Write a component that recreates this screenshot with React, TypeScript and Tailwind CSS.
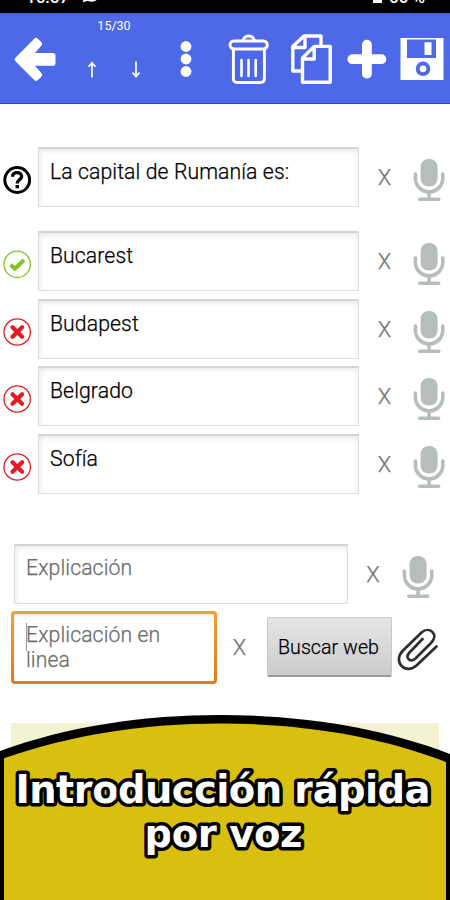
import React from "react";

function Mic() {
  return (
    <svg className="h-[44px] w-[32px] shrink-0" viewBox="0 0 32 44">
      <rect x="7.6" y="1" width="17" height="27.5" rx="8" fill="#b6bebd" />
      <path d="M2.4 16v4.2a13.7 13.7 0 0 0 27.4 0V16M16.1 34v7" fill="none" stroke="#b6bebd" strokeWidth="3.6" strokeLinecap="round" />
      <path d="M6.8 41.2h18.8" stroke="#b6bebd" strokeWidth="3.6" strokeLinecap="round" />
    </svg>
  );
}

function QuestionIcon() {
  return (
    <svg className="h-[30px] w-[30px]" viewBox="0 0 30 30" fill="none" stroke="#000">
      <circle cx="15.2" cy="15" r="12.4" strokeWidth="3" />
      <path d="M10.6 11.8C10.6 9.1 12.6 7.7 15.1 7.7C17.7 7.7 19.6 9.2 19.6 11.5C19.6 14.4 15.2 14.7 15.2 18.6" strokeWidth="3.3" />
      <path d="M13.5 20h3.5v3.3h-3.5z" fill="#000" stroke="none" />
    </svg>
  );
}

function CheckIcon() {
  return (
    <svg className="h-[30px] w-[30px]" viewBox="0 0 30 30" fill="none" stroke="#84c225">
      <circle cx="15.2" cy="15.3" r="13.2" strokeWidth="1.3" />
      <path d="M8.6 15.8l4.3 3.9L22 11" strokeWidth="4" strokeLinejoin="round" />
    </svg>
  );
}

function WrongIcon() {
  return (
    <svg className="h-[30px] w-[30px]" viewBox="0 0 30 30" fill="none" stroke="#e31b23">
      <circle cx="15.2" cy="15" r="13.2" strokeWidth="1.3" />
      <path d="M10.5 10.2l9.6 9.6M20.1 10.2l-9.6 9.6" strokeWidth="4.2" strokeLinecap="round" />
    </svg>
  );
}

const fieldText = "font-light text-[21.2px] leading-[24.7px] tracking-[0.1px] [-webkit-text-stroke-width:0.25px]";

const box = `border border-t-2 border-[#dedede] border-t-[#d4d4d4] bg-white shadow-[inset_3px_4px_7px_-3px_#e4e4e4,inset_-3px_0_6px_-4px_#e4e4e4] ${fieldText}`;

function Clear({ className }: { className: string }) {
  return (
    <span className={`w-[14px] text-center text-[22px] font-light leading-[25px] text-[#757575] [-webkit-text-stroke-width:0.25px] ${className}`}>
      X
    </span>
  );
}

function Row({ icon, text, className }: { icon: React.ReactNode; text: string; className: string }) {
  return (
    <div className={`flex h-[60px] shrink-0 items-start ${className}`}>
      <div className="ml-[2px] mt-[18px] h-[30px] w-[30px] shrink-0">{icon}</div>
      <div className={`ml-[6px] h-[60px] w-[321px] shrink-0 pl-[11px] pt-[10.5px] text-black ${box}`}>{text}</div>
      <Clear className="ml-[18.5px] mt-[18px]" />
      <div className="ml-[21.5px] mt-[11px]">
        <Mic />
      </div>
    </div>
  );
}

function StatusBar() {
  return (
    <div className="flex h-[13px] shrink-0 items-end overflow-hidden bg-black pb-[6px] text-[17px] font-medium leading-[20px] text-white">
      <span className="ml-[26px] w-[43px]">16:57</span>
      <svg className="ml-[13px] mb-[4px] h-[18px] w-[18px] shrink-0" viewBox="0 0 18 18" fill="none" stroke="#fff" strokeWidth="1.9">
        <path d="M2 16l1.2-4A7.2 7.2 0 1 1 6 14.9z" />
        <path d="M6 6q0 5 6 6" />
      </svg>
      <svg className="ml-[273px] mb-[4px] h-[16px] w-[9px] shrink-0" viewBox="0 0 9 16" fill="#fff">
        <path d="M0 2h3V0h3v2h3v14H0z" />
      </svg>
      <span className="ml-[7px] whitespace-nowrap">60 %</span>
    </div>
  );
}

function Toolbar() {
  return (
    <div className="flex h-[91px] shrink-0 items-start border-b border-t border-b-[#1846d2] border-t-[#3c55c0] bg-[#4d69e8] text-white">
      <svg className="ml-[12px] mt-[21px] h-[48px] w-[46px]" viewBox="0 0 46 48" fill="#fff" stroke="#fff" strokeLinejoin="round">
        <path d="M5.2 24.4L24 5.5L27.7 8.9L17.3 20.5H41V28.2H17.3L27.7 39.9L24 43.3z" strokeWidth="5" />
      </svg>
      <div className="ml-[24px] flex w-[64px] flex-col items-center">
        <span className="mt-[4px] text-[12.5px] leading-[16px]">15/30</span>
        <div className="mt-[27px] flex gap-[34px]">
          <svg className="h-[18px] w-[10px]" viewBox="0 0 10 18" fill="none" stroke="#fff" strokeWidth="1.7">
            <path d="M5 16.5V1.5M1.5 5.8L5 1.8l3.5 4" />
          </svg>
          <svg className="h-[18px] w-[10px]" viewBox="0 0 10 18" fill="none" stroke="#fff" strokeWidth="1.7">
            <path d="M5 .5v15M1.5 11.5L5 15.5l3.500-4" />
          </svg>
        </div>
      </div>
      <svg className="ml-[34px] mt-[26px] h-[38px] w-[12px]" viewBox="0 0 12 38" fill="#fff">
        <circle cx="6" cy="6.5" r="5.4" />
        <circle cx="6" cy="19" r="5.4" />
        <circle cx="6" cy="31.5" r="5.4" />
      </svg>
      <svg className="ml-[36px] mt-[19px] h-[52px] w-[42px]" viewBox="0 0 42 52" fill="none" stroke="#fff" strokeWidth="2.9">
        <path d="M15 8q1-5 5.7-5t5.7 5" />
        <rect x="2" y="8" width="37.3" height="8" rx="3.9" />
        <path d="M5.4 17V45.5q0 4 4 4h23q4 0 4-4V17" />
        <path d="M13.5 27v16M20.5 27v16M27.7 27v16" strokeWidth="2.6" strokeLinecap="round" />
      </svg>
      <svg className="ml-[20px] mt-[19px] h-[52px] w-[43px]" viewBox="0 0 43 52" fill="none" stroke="#fff" strokeWidth="3.4" strokeLinejoin="round">
        <path d="M11 38H2.8V13.5L14 3h17v9.5M15 3.5v11H3" />
        <path d="M12.5 25L24.2 13.4h16v35.9H12.5zM24.2 14v12H12.5" />
      </svg>
      <svg className="ml-[13px] mt-[25px] h-[42px] w-[42px]" viewBox="0 0 42 42" fill="none" stroke="#fff" strokeWidth="9.8" strokeLinecap="round">
        <path d="M20.9 5.7v29M6.4 20.2h29" />
      </svg>
      <svg className="ml-[12px] mt-[23px] h-[44px] w-[44px]" viewBox="0 0 44 44">
        <path d="M.5 1h43v42H.5z" fill="#fff" />
        <path d="M7 2.5h29V21H7zM24.5 5.3v12.7h7V5.3z" fill="#4d69e8" fillRule="evenodd" />
        <circle cx="23" cy="31.8" r="5.3" fill="none" stroke="#4d69e8" strokeWidth="3.9" />
      </svg>
    </div>
  );
}

function Banner() {
  return (
    <svg
      className="absolute left-0 top-[710px] h-[190px] w-[450px] font-['DejaVu_Sans',sans-serif] text-[38.5px] font-bold"
      viewBox="0 0 450 190"
    >
      <path d="M0 41C68 16 145 5 220 5C300 5 380 17 450 44V190H0z" fill="#000" />
      <path d="M4 48.3C72 24.5 145 13.5 220 13.5C298 13.5 376 25 446 52V190H4z" fill="#d9c010" />
      <g fill="#fff" stroke="#000" strokeWidth="7" strokeLinejoin="round" paintOrder="stroke">
        <text x="15.5" y="93" textLength="415">Introducción rápida</text>
        <text x="144.5" y="136.5" textLength="158">por voz</text>
      </g>
    </svg>
  );
}

export default function App() {
  return (
    <div className="relative flex h-[900px] w-[450px] flex-col overflow-hidden bg-white font-['Roboto',sans-serif]">
      <StatusBar />
      <Toolbar />
      <Row className="mt-[43px]" icon={<QuestionIcon />} text="La capital de Rumanía es:" />
      <Row className="mt-[24px]" icon={<CheckIcon />} text="Bucarest" />
      <Row className="mt-[8px]" icon={<WrongIcon />} text="Budapest" />
      <Row className="mt-[7px]" icon={<WrongIcon />} text="Belgrado" />
      <Row className="mt-[8px]" icon={<WrongIcon />} text="Sofía" />
      <div className="mt-[50px] flex h-[60px] shrink-0 items-start">
        <div className={`ml-[14px] h-[60px] w-[334px] shrink-0 pl-[11px] pt-[10px] text-[#6c6c6c] ${box}`}>Explicación</div>
        <Clear className="ml-[18px] mt-[18px]" />
        <div className="ml-[22px] mt-[11px]">
          <Mic />
        </div>
      </div>
      <div className="mt-[7px] flex h-[73px] shrink-0 items-start">
        <div className="ml-[11px] h-[73px] w-[206px] shrink-0 rounded-[4px] bg-linear-to-b from-[#f3a032] to-[#e07a1c] p-[3px]">
          <div className={`flex h-[67px] rounded-[1px] bg-white pt-[9px] text-[#6c6c6c] shadow-[inset_1px_3px_5px_-2px_#e2e2e2] ${fieldText}`}>
            <span className="ml-[12px] h-[28px] w-px shrink-0 bg-[#999]" />
            <span className="-ml-px w-[150px]">Explicación en linea</span>
          </div>
        </div>
        <Clear className="ml-[15.5px] mt-[24px]" />
        <button className="ml-[20.5px] mt-[6px] h-[60px] w-[125px] shrink-0 rounded-[2px] border border-b-2 border-[#c8c8c8] border-b-[#999] bg-linear-to-b from-[#e6e6e6] to-[#cbcbcb] pr-[2px] pt-[2px] text-[19.6px] font-light tracking-[0.05px] text-black [-webkit-text-stroke-width:0.25px]">
          Buscar web
        </button>
        <svg className="ml-[4px] mt-[15px] h-[46px] w-[44px]" viewBox="0 0 44 46" fill="none" stroke="#2e2e30" strokeWidth="2.7" strokeLinecap="round" strokeLinejoin="round">
          <path d="M26.5 13L13.5 26.5C8.5 32 14.5 37 19.5 32.5L35.5 16.5C43 8.5 33.5-.5 25.5 6.5L6.5 25C-3.5 36 9.5 49 20.5 39.5L40.5 20.5" />
        </svg>
      </div>
      <div className="ml-[11px] mt-[39px] h-[177px] w-[428px] shrink-0 bg-[#f3f2d2]" />
      <Banner />
    </div>
  );
}
